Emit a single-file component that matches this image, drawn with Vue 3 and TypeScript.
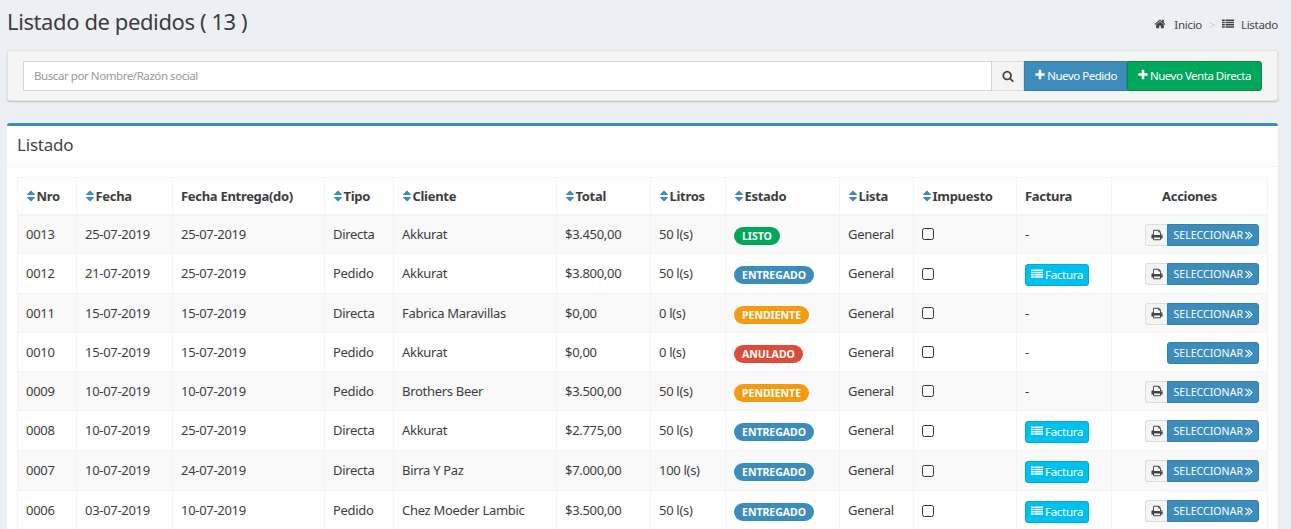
<template>
  <div class="page">
    <header class="page-head">
      <h1>Listado de pedidos ( {{ orders.length + 5 }} )</h1>
      <ol class="breadcrumb">
        <li>
          <svg class="ico" viewBox="0 0 1792 1792"><path :d="icons.home" /></svg>
          Inicio
        </li>
        <li class="sep">&gt;</li>
        <li>
          <svg class="ico" viewBox="0 0 1792 1792"><path :d="icons.list" /></svg>
          Listado
        </li>
      </ol>
    </header>

    <section class="search-box">
      <div class="search-input">Buscar por Nombre/Razón social</div>
      <button class="search-btn">
        <svg class="ico" viewBox="0 0 1792 1792"><path :d="icons.search" /></svg>
      </button>
      <button class="act blue">
        <svg class="ico" viewBox="0 0 1792 1792"><path :d="icons.plus" /></svg>Nuevo Pedido
      </button>
      <button class="act green">
        <svg class="ico" viewBox="0 0 1792 1792"><path :d="icons.plus" /></svg>Nuevo Venta Directa
      </button>
    </section>

    <section class="card">
      <h3 class="card-title">Listado</h3>
      <div class="card-body">
        <table>
          <colgroup>
            <col v-for="w in colWidths" :key="w.name" :style="{ width: w.px + 'px' }" />
          </colgroup>
          <thead>
            <tr>
              <th v-for="c in colWidths" :key="c.name" :class="{ center: c.name === 'Acciones' }">
                <svg v-if="c.sort" class="sort" viewBox="0 0 1792 1792"><path :d="icons.sort" /></svg>{{ c.name }}
              </th>
            </tr>
          </thead>
          <tbody>
            <tr v-for="o in orders" :key="o.nro" :class="{ tall: o.tall }">
              <td>{{ o.nro }}</td>
              <td>{{ o.fecha }}</td>
              <td>{{ o.entrega }}</td>
              <td>{{ o.tipo }}</td>
              <td>{{ o.cliente }}</td>
              <td>{{ o.total }}</td>
              <td>{{ o.litros }}</td>
              <td><span class="badge" :class="o.estado.toLowerCase()">{{ o.estado }}</span></td>
              <td>General</td>
              <td><span class="check"></span></td>
              <td>
                <button v-if="o.factura" class="factura">
                  <svg class="ico" viewBox="0 0 1792 1792"><path :d="icons.list" /></svg>Factura
                </button>
                <template v-else>-</template>
              </td>
              <td class="actions">
                <button v-if="o.print" class="print">
                  <svg class="ico" viewBox="0 0 1792 1792"><path :d="icons.print" /></svg>
                </button><button class="select" :class="{ joined: o.print }">SELECCIONAR<svg class="ico" viewBox="0 0 1792 1792"><path :d="icons.angles" /></svg></button>
              </td>
            </tr>
          </tbody>
        </table>
      </div>
    </section>
  </div>
</template>

<script setup lang="ts">
interface Order {
  nro: string;
  fecha: string;
  entrega: string;
  tipo: string;
  cliente: string;
  total: string;
  litros: string;
  estado: 'LISTO' | 'ENTREGADO' | 'PENDIENTE' | 'ANULADO';
  factura: boolean;
  print: boolean;
  tall: boolean;
}

const icons = {
  home: 'M1472 992v480q0 26-19 45t-45 19h-384v-384h-256v384h-384q-26 0-45-19t-19-45v-480q0-1 .5-3t.5-3l575-474 575 474q1 2 1 6zm223-69l-62 74q-8 9-21 11h-3q-13 0-21-7l-692-577-692 577q-12 8-24 7-13-2-21-11l-62-74q-8-10-7-23.5t11-21.5l719-599q32-26 76-26t76 26l244 204v-195q0-14 9-23t23-9h192q14 0 23 9t9 23v408l219 182q10 8 11 21.5t-7 23.5z',
  list: 'M0 224h416v240H0zM0 560h416v240H0zM0 896h416v240H0zM0 1232h416v240H0zM512 224h1280v240H512zM512 560h1280v240H512zM512 896h1280v240H512zM512 1232h1280v240H512z',
  search: 'M1216 832q0-185-131.5-316.5t-316.5-131.5-316.5 131.5-131.5 316.5 131.5 316.5 316.5 131.5 316.5-131.5 131.5-316.5zm512 832q0 52-38 90t-90 38q-54 0-90-38l-343-342q-179 124-399 124-143 0-273.5-55.5t-225-150-150-225-55.5-273.5 55.5-273.5 150-225 225-150 273.5-55.5 273.5 55.5 225 150 150 225 55.5 273.5q0 220-124 399l343 343q37 37 37 90z',
  plus: 'M1600 736v192q0 40-28 68t-68 28h-416v416q0 40-28 68t-68 28h-192q-40 0-68-28t-28-68v-416h-416q-40 0-68-28t-28-68v-192q0-40 28-68t68-28h416v-416q0-40 28-68t68-28h192q40 0 68 28t28 68v416h416q40 0 68 28t28 68z',
  sort: 'M1408 1088q0 26-19 45l-448 448q-19 19-45 19t-45-19l-448-448q-19-19-19-45t19-45 45-19h896q26 0 45 19t19 45zm0-384q0 26-19 45t-45 19h-896q-26 0-45-19t-19-45 19-45l448-448q19-19 45-19t45 19l448 448q19 19 19 45z',
  print: 'M448 1536h896v-256h-896v256zm0-640h896v-384h-160q-40 0-68-28t-28-68v-160h-640v640zm1152 64q0-26-19-45t-45-19-45 19-19 45 19 45 45 19 45-19 19-45zm128 0v416q0 13-9.5 22.5t-22.5 9.5h-224v160q0 40-28 68t-68 28h-960q-40 0-68-28t-28-68v-160h-224q-13 0-22.5-9.5t-9.5-22.5v-416q0-79 56.5-135.5t135.5-56.5h64v-544q0-40 28-68t68-28h672q40 0 88 20t76 48l152 152q28 28 48 76t20 88v256h64q79 0 135.5 56.5t56.5 135.5z',
  angles: 'M979 960q0 13-10 23l-466 466q-10 10-23 10t-23-10l-50-50q-10-10-10-23t10-23l393-393-393-393q-10-10-10-23t10-23l50-50q10-10 23-10t23 10l466 466q10 10 10 23zm384 0q0 13-10 23l-466 466q-10 10-23 10t-23-10l-50-50q-10-10-10-23t10-23l393-393-393-393q-10-10-10-23t10-23l50-50q10-10 23-10t23 10l466 466q10 10 10 23z'
};

const colWidths = [
  { name: 'Nro', px: 59, sort: true },
  { name: 'Fecha', px: 96, sort: true },
  { name: 'Fecha Entrega(do)', px: 152, sort: false },
  { name: 'Tipo', px: 69, sort: true },
  { name: 'Cliente', px: 163, sort: true },
  { name: 'Total', px: 94, sort: true },
  { name: 'Litros', px: 75, sort: true },
  { name: 'Estado', px: 114, sort: true },
  { name: 'Lista', px: 74, sort: true },
  { name: 'Impuesto', px: 103, sort: true },
  { name: 'Factura', px: 95, sort: false },
  { name: 'Acciones', px: 156, sort: false }
];

const orders: Order[] = [
  { nro: '0013', fecha: '25-07-2019', entrega: '25-07-2019', tipo: 'Directa', cliente: 'Akkurat', total: '$3.450,00', litros: '50 l(s)', estado: 'LISTO', factura: false, print: true, tall: false },
  { nro: '0012', fecha: '21-07-2019', entrega: '25-07-2019', tipo: 'Pedido', cliente: 'Akkurat', total: '$3.800,00', litros: '50 l(s)', estado: 'ENTREGADO', factura: true, print: true, tall: true },
  { nro: '0011', fecha: '15-07-2019', entrega: '15-07-2019', tipo: 'Directa', cliente: 'Fabrica Maravillas', total: '$0,00', litros: '0 l(s)', estado: 'PENDIENTE', factura: false, print: true, tall: false },
  { nro: '0010', fecha: '15-07-2019', entrega: '15-07-2019', tipo: 'Pedido', cliente: 'Akkurat', total: '$0,00', litros: '0 l(s)', estado: 'ANULADO', factura: false, print: false, tall: false },
  { nro: '0009', fecha: '10-07-2019', entrega: '10-07-2019', tipo: 'Pedido', cliente: 'Brothers Beer', total: '$3.500,00', litros: '50 l(s)', estado: 'PENDIENTE', factura: false, print: true, tall: false },
  { nro: '0008', fecha: '10-07-2019', entrega: '25-07-2019', tipo: 'Directa', cliente: 'Akkurat', total: '$2.775,00', litros: '50 l(s)', estado: 'ENTREGADO', factura: true, print: true, tall: true },
  { nro: '0007', fecha: '10-07-2019', entrega: '24-07-2019', tipo: 'Directa', cliente: 'Birra Y Paz', total: '$7.000,00', litros: '100 l(s)', estado: 'ENTREGADO', factura: true, print: true, tall: true },
  { nro: '0006', fecha: '03-07-2019', entrega: '10-07-2019', tipo: 'Pedido', cliente: 'Chez Moeder Lambic', total: '$3.500,00', litros: '50 l(s)', estado: 'ENTREGADO', factura: true, print: true, tall: true }
];
</script>

<style>
html,
body {
  margin: 0;
  height: 529px;
  overflow: hidden;
  background: #ecf0f5;
}
</style>

<style scoped>
.page {
  font-family: "Noto Sans", "Open Sans", sans-serif;
  font-size: 13px;
  letter-spacing: -0.3px;
  color: #3d3d3d;
  padding: 0 13px 0 7px;
}

.ico {
  width: 1em;
  height: 1em;
  fill: currentColor;
  vertical-align: -0.12em;
}

button {
  font-family: inherit;
  letter-spacing: inherit;
  border: 1px solid transparent;
  cursor: pointer;
}

.page-head {
  height: 50px;
  display: flex;
  align-items: flex-start;
  justify-content: space-between;
}

h1 {
  margin: 4px 0 0;
  font-size: 22px;
  line-height: 34px;
  font-weight: 400;
  letter-spacing: -0.4px;
}

.breadcrumb {
  display: flex;
  gap: 7px;
  list-style: none;
  margin: 17px 0 0;
  padding: 0;
  font-size: 11.5px;
  line-height: 16px;
  color: #444;
}

.breadcrumb .ico {
  margin-right: 4px;
  font-size: 12px;
}

.breadcrumb li:first-child .ico {
  margin-right: 6px;
}

.sep {
  color: #ccc;
}

.search-box {
  display: flex;
  height: 51px;
  box-sizing: border-box;
  padding: 10px 15px;
  background: #f5f5f5;
  border: 1px solid #e3e3e3;
  border-radius: 3px;
  box-shadow: 0 1px 2px rgba(0, 0, 0, 0.2);
}

.search-input {
  flex: 1;
  box-sizing: border-box;
  height: 30px;
  padding: 0 10px;
  background: #fff;
  border: 1px solid #d2d6de;
  font-size: 11.5px;
  line-height: 28px;
  letter-spacing: -0.43px;
  color: #999;
}

.search-btn {
  width: 32px;
  height: 30px;
  padding: 0;
  background: #f4f4f4;
  border-color: #ddd;
  border-left: 0;
  color: #444;
  font-size: 12px;
}

.act {
  height: 30px;
  padding: 0 9px;
  color: #fff;
  font-size: 11.5px;
  line-height: 28px;
  letter-spacing: -0.48px;
}

.act .ico {
  margin-right: 1px;
  font-size: 12px;
}

.blue {
  background: #3c8dbc;
  border-color: #367fa9;
}

.green {
  padding-right: 10px;
  background: #00a65a;
  border-color: #008d4c;
  border-radius: 0 3px 3px 0;
}

.card {
  margin-top: 22px;
  background: #fff;
  border-top: 3px solid #3c8dbc;
  border-radius: 3px;
  box-shadow: 0 1px 1px rgba(0, 0, 0, 0.1);
}

.card-title {
  margin: 0;
  height: 41px;
  box-sizing: border-box;
  padding: 9px 10px;
  font-size: 17px;
  line-height: 20px;
  font-weight: 400;
  letter-spacing: -0.2px;
  color: #444;
  border-bottom: 1px solid #f4f4f4;
}

.card-body {
  padding: 10px;
}

table {
  width: 1250px;
  table-layout: fixed;
  border-collapse: collapse;
}

th,
td {
  box-sizing: border-box;
  padding: 0 8px;
  border: 1px solid #f4f4f4;
  text-align: left;
  white-space: nowrap;
  overflow: hidden;
}

th {
  height: 37px;
  font-weight: 700;
  border-bottom-width: 2px;
}

td {
  height: 39px;
  padding-bottom: 1px;
}

.tall td {
  height: 40px;
}

th.center {
  text-align: center;
}

tbody tr:nth-child(odd) {
  background: #f9f9f9;
}

.sort {
  width: 14px;
  height: 14px;
  margin: 0 -1.5px 0 -2px;
  fill: #3c8dbc;
  vertical-align: -2.5px;
}

.badge {
  display: inline-block;
  height: 18px;
  margin-top: 4px;
  padding: 0 8px;
  border-radius: 10px;
  color: #fff;
  font-size: 10.5px;
  line-height: 18px;
  font-weight: 700;
  letter-spacing: 0;
  vertical-align: middle;
}

.listo {
  background: #00a65a;
}

.entregado {
  background: #3c8dbc;
}

.pendiente {
  background: #f39c12;
}

.anulado {
  background: #dd4b39;
}

.check {
  display: inline-block;
  width: 10px;
  height: 10px;
  margin-top: -2px;
  border: 1px solid #333;
  border-radius: 2.5px;
  vertical-align: middle;
}

.factura {
  height: 22px;
  padding: 0 5px;
  margin-top: 3px;
  background: #00c0ef;
  border-color: #00acd6;
  border-radius: 3px;
  color: #fff;
  font-size: 11.5px;
  line-height: 20px;
  vertical-align: middle;
}

.factura .ico {
  margin-right: 2px;
  font-size: 12px;
}

.actions {
  text-align: right;
}

.print {
  width: 22px;
  height: 22px;
  margin-top: 2px;
  padding: 0;
  background: #f4f4f4;
  border-color: #ddd;
  border-radius: 3px 0 0 3px;
  border-right: 0;
  color: #444;
  font-size: 12px;
  vertical-align: middle;
}

.select {
  height: 22px;
  margin-top: 2px;
  padding: 0 2px 0 5px;
  background: #3c8dbc;
  border-color: #367fa9;
  border-radius: 3px;
  color: #fff;
  font-size: 10.5px;
  line-height: 20px;
  letter-spacing: 0.05px;
  vertical-align: middle;
}

.select.joined {
  border-radius: 0 3px 3px 0;
}

.select .ico {
  margin-left: -1px;
  font-size: 14px;
  vertical-align: -0.22em;
}
</style>
